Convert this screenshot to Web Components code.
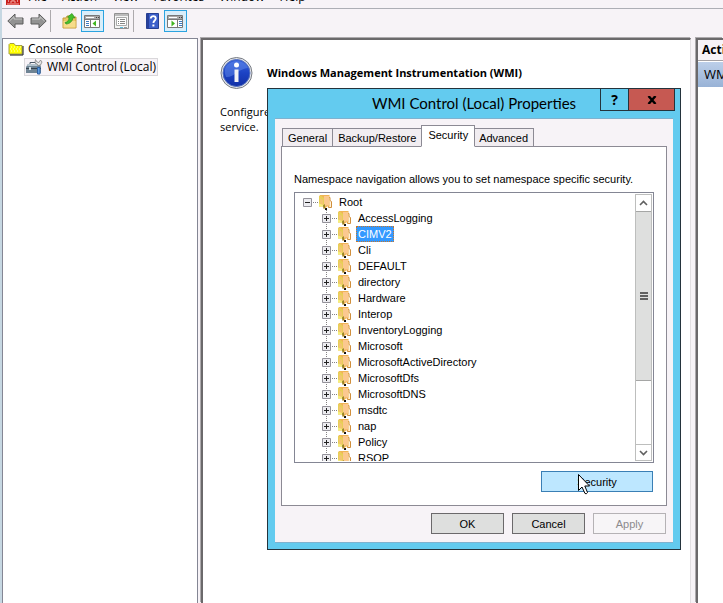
<!DOCTYPE html>
<html lang="en">
<head>
<meta charset="utf-8">
<title>WMI Control</title>
<style>
html,body{height:100%;margin:0}
body{background:#f7f3f7;color:#000;font:12px/16px "Open Sans","Noto Sans",sans-serif;overflow:hidden}
</style>
</head>
<body>
<mmc-console></mmc-console>
<script>
const define = (name, html, setup) => customElements.define(name, class extends HTMLElement {
  constructor() {
    super();
    const t = document.createElement('template');
    t.innerHTML = html;
    this.attachShadow({mode: 'open'}).append(t.content.cloneNode(true));
  }
  connectedCallback() { if (setup) setup(this, this.shadowRoot); }
});

define('menu-bar', `
<style>
:host{display:flex;align-items:flex-end;height:8px;overflow:hidden;border-bottom:1px solid #adaeb5;padding:0 0 0 4px}
svg{flex:none;margin-bottom:3px}
nav{display:flex;gap:15px;margin-left:8px;padding-bottom:3px}
button{font:inherit;line-height:16px;border:0;padding:0;background:none;color:inherit}
</style>
<svg width="14" height="14" viewBox="0 0 14 14"><path d="M0 0h14v14H0z" fill="#c9201c"/><path d="M4 11h2v-2h2v2h2M1 13h12" stroke="#f3a8a0" fill="none"/><path d="M2 10h1M11 10h1" stroke="#fff"/></svg>
<nav><button>File</button><button>Action</button><button>View</button><button>Favorites</button><button>Window</button><button>Help</button></nav>`);

define('tool-button', `
<style>
:host{display:block}
button{display:grid;place-items:center;width:23px;height:22px;padding:0;border:1px solid transparent;background:none}
:host([pressed]) button{background:#d9eefa;border-color:#2ba3e0}
</style>
<button type="button"><slot></slot></button>`, (el, root) => {
  root.querySelector('button').setAttribute('aria-label', el.getAttribute('label'));
});

define('tool-bar', `
<style>
:host{display:flex;align-items:flex-start;padding:1px 0 6px 2px}
i{width:1px;height:22px;background:#adaaad;margin-right:7px}
.gap{margin-left:6px}
svg{display:block}
</style>
<tool-button label="Back"><svg width="17" height="16" viewBox="0 0 17 16"><path d="M.8 8 8 1v4h8v6H8v4z" fill="#929292" stroke="#5d5d5d"/><path d="M2.500 8 7 3.600V6h8" stroke="#c8c8c8" fill="none"/></svg></tool-button>
<tool-button label="Forward"><svg width="17" height="16" viewBox="0 0 17 16"><path d="M16.200 8 9 1v4H1v6h8v4z" fill="#929292" stroke="#5d5d5d"/><path d="M2 6h8V3.600L14.500 8" stroke="#c8c8c8" fill="none"/></svg></tool-button>
<i></i>
<tool-button label="Up one level"><svg width="15" height="16" viewBox="0 0 15 16"><path d="M1 5h3l1-2h3l1 1h5v11H1z" fill="#e9c765" stroke="#c79a3c"/><path d="M1.500 8h12v6.500h-12z" fill="#f6dc8b"/><path d="M3 9.500C6 9 7 7 7 4.500L5.500 4 10 .5l3 4.500-2-.4C10.500 8.500 7.500 11 4 11z" fill="#45c02b" stroke="#2c8f1c" stroke-width=".7"/></svg></tool-button>
<tool-button label="Show or hide console tree" pressed><svg width="17" height="15" viewBox="0 0 17 15"><path d="M.5 1.500h15v12H.5z" fill="#fff" stroke="#787878"/><path d="M1 2h14v3H1z" fill="#a9a9a9"/><path d="M2 3.500h8" stroke="#fff"/><path d="M12 3.500h1m1 0h1" stroke="#444"/><path d="M1 5.500h14M6.500 6v7" stroke="#787878"/><path d="M2 7.500h3M2 9.500h3M2 11.500h3" stroke="#3d7ac0"/><path d="M12 6.500v6L8.500 9.500z" fill="#3fb521"/></svg></tool-button>
<tool-button class="gap" label="Properties"><svg width="15" height="16" viewBox="0 0 15 16"><path d="M.5.500h14v15H.5z" fill="#f4f4f4" stroke="#929292"/><path d="M1 2h13" stroke="#bbb" stroke-width="2"/><path d="M2.500 4.500h10v8h-10z" fill="#fff" stroke="#aaa"/><path d="M4 6.500h1m1 0h5M4 8.500h1m1 0h5M4 10.500h1m1 0h5" stroke="#858585"/><path d="M6 14.500h3" stroke="#56bce0"/><path d="M10 14.500h3" stroke="#999"/></svg></tool-button>
<i></i>
<tool-button label="Help"><svg width="13" height="16" viewBox="0 0 13 16"><path d="M.5.500h12v15H.5z" fill="#3c5fca" stroke="#263f93"/><path d="M1 1h2v14H1z" fill="#27409b"/><path d="M4.800 5.500c0-3.300 5-3.300 5 0C9.800 7.500 7.400 7.500 7.400 10" fill="none" stroke="#fff" stroke-width="1.800"/><path d="M6.400 11.500h2v2h-2z" fill="#fff"/></svg></tool-button>
<tool-button label="Show or hide action pane" pressed><svg width="17" height="15" viewBox="0 0 17 15"><path d="M.5 1.500h15v12H.5z" fill="#fff" stroke="#787878"/><path d="M1 2h14v3H1z" fill="#a9a9a9"/><path d="M2 3.500h8" stroke="#fff"/><path d="M12 3.500h1m1 0h1" stroke="#444"/><path d="M1 5.500h14M10.500 6v7" stroke="#787878"/><path d="M12 7.500h3M12 9.500h3M12 11.500h3" stroke="#3d7ac0"/><path d="M4.500 6.500v6L8 9.500z" fill="#3fb521"/></svg></tool-button>`);

define('console-tree', `
<style>
:host{display:block;background:#fff;border:1px solid #848694;border-bottom:0;padding:1px 0 0 5px}
ul{list-style:none;margin:0;padding:0}
li span{display:flex;align-items:center;height:18px;width:max-content}
ul ul{padding-left:16px}
.root{gap:4px}
.sel{gap:4px;padding:0 1px;height:16px;border:1px solid #d9d7da;background:#f7f3f7}
svg{flex:none}
</style>
<ul role="tree"><li role="treeitem"><span class="root"><svg width="16" height="14" viewBox="0 0 16 14"><path d="M1 12V2.500L2 1.500h4l1.500 2H14V12z" fill="#ffff00" stroke="#a6a240"/><path d="M3 5h1m2 0h1m2 0h1m2 0h1M2 7h1m2 0h1m2 0h1m2 0h1M3 9h1m2 0h1m2 0h1m2 0h1" stroke="#ffffc4"/><path d="M15 4v9H2" fill="none" stroke="#111"/></svg>Console Root</span>
<ul role="group"><li role="treeitem" aria-selected="true"><span class="sel"><svg width="17" height="16" viewBox="0 0 17 16"><path d="M4 5.500V3.500h6v2" fill="none" stroke="#4a5866"/><path d="M2 5h12l1 3v6H0V8z" fill="#6f8494"/><path d="M2 5h10l1 2H1z" fill="#b3c2cc"/><path d="M0 9.500h15" stroke="#36424d"/><path d="M3 8h2v3H3z" fill="#dce5ea"/><path d="M12.500 5v2" stroke="#888" stroke-width="2"/><path d="M9.500.5 11 3l2 .5L14.500 1l1.500 2-1.500 3-2 .5L9 3.500z" fill="#e6e6e6" stroke="#777" stroke-width=".7"/><path d="M11.500 8.500h2.500v6.500h-2.500z" fill="#5d9de0" stroke="#2d60a4"/></svg>WMI Control (Local)</span></li></ul></li></ul>`);

define('details-pane', `
<style>
:host{display:block;background:#fff;border:solid #6b696b;border-width:2px 0 0 2px;border-right:1px solid #e2dfe2;box-shadow:-1px -1px 0 #adaaad;padding:16px 17px}
header{display:flex;align-items:center;gap:14px}
h1{font-size:11px;line-height:16px;margin:0}
p{font-size:11px;line-height:15px;margin:14px 0 0}
svg{flex:none}
</style>
<header><svg width="33" height="34" viewBox="0 0 33 34"><defs><linearGradient id="g" x2="0" y2="1"><stop stop-color="#3763dc"/><stop offset=".5" stop-color="#1c43c4"/><stop offset="1" stop-color="#1230a6"/></linearGradient></defs><circle cx="16.500" cy="17" r="15.500" fill="#e4e6ea" stroke="#777c84"/><circle cx="16.500" cy="17" r="13.500" fill="url(#g)" stroke="#5571bd"/><path d="M5 13C8 3 25 3 28 12C20 12 13 22 6 21Q4 17 5 13" fill="#6b93ee" opacity=".45"/><circle cx="16.500" cy="9" r="2.500" fill="#fff"/><path d="M14.500 13.500h4V26h-4z" fill="#f2f2f4"/></svg><h1>Windows Management Instrumentation (WMI)</h1></header>
<p>Configures and controls the Windows Management Instrumentation (WMI)<br>service.</p>`);

define('action-pane', `
<style>
:host{display:block;background:#fff;border:solid #6b696b;border-width:2px 0 0 2px;box-shadow:-1px -1px 0 #adaaad;overflow:hidden;white-space:nowrap}
h2{font-size:12px;line-height:20px;margin:0;padding:0 4px;background:#f7f3f7;border-bottom:1px solid #a5a2a5}
div{margin-top:1px;padding:0 6px;font-size:13px;line-height:25px;background:linear-gradient(#bccfe9,#98b2d6)}
</style>
<h2>Actions</h2><div>WMI Control (Local)</div>`);

define('namespace-item', `
<style>
:host{display:flex;height:16px;align-items:center}
svg{flex:none}
span{padding:0 2px;line-height:16px;margin-left:3px}
:host([selected]) span{background:#3399ff;color:#fff;outline:1px dotted #c8762a;outline-offset:-1px}
.v{display:none}
:host([leaf]) .v{display:inline}
:host(:not([leaf])) .r{display:inline}
.r{display:none}
</style>
<svg width="31" height="16" viewBox="0 0 31 16">
<path class="v" d="M4.500 0v16" stroke="#848284" stroke-dasharray="1 1"/>
<path class="r" d="M23.500 14v2" stroke="#848284" stroke-dasharray="1 1"/>
<path d="M10 8.500h5" stroke="#848284" stroke-dasharray="1 1"/>
<path d="M.5 4.500h8v8h-8z" fill="#ececf0" stroke="#94929a"/><path d="M2 8.500h5" stroke="#222"/><path class="v" d="M4.500 6v5" stroke="#222"/>
<path d="M22 14h2v2h-2z" fill="#111"/>
<path d="M25.500 3.500h1.500v3l1.500 1v6h-3z" fill="#fff1d8" stroke="#d08f3c"/>
<path d="M16 2.500 17 1h9.500v11.500H24L21.500 15 20 12.500h-4z" fill="#f0b455"/>
<path d="M21 2h5v9.500h-2.500L21 12z" fill="#fbc88f"/>
<path d="M16 2.500 18 1.500 21 4v7.500L16 12z" fill="#e8cf58"/>
<path d="M17 4l3 2v5h-3z" fill="#f3c572"/>
<path d="M16 9.500 20 11v1.500h-4z" fill="#f5f07c"/>
<path d="M20 11.500 22 10v3.500L20.500 15z" fill="#98862b"/></svg><span><slot></slot></span>`);

define('scroll-track', `
<style>
:host{display:flex;flex-direction:column;width:15px;border:1px solid #bdbebd;background:#fff}
button{flex:none;display:grid;place-items:center;height:16px;padding:0;border:0;background:#fff}
.track{flex:1;display:flex;flex-direction:column}
.thumb{height:72%;display:grid;place-items:center;background:#dedfde;border:solid #a5a6a5;border-width:1px 0}
.down{border-top:1px solid #bdbebd}
</style>
<button type="button" aria-label="Scroll up"><svg width="9" height="6" viewBox="0 0 9 6"><path d="M1 5 4.500 1.500 8 5" fill="none" stroke="#606060" stroke-width="1.600"/></svg></button>
<div class="track"><div class="thumb"><svg width="8" height="8" viewBox="0 0 8 8"><path d="M0 1h8M0 4h8M0 7h8" stroke="#606060" stroke-width="2"/></svg></div></div>
<button type="button" class="down" aria-label="Scroll down"><svg width="9" height="6" viewBox="0 0 9 6"><path d="M1 1 4.500 4.500 8 1" fill="none" stroke="#606060" stroke-width="1.600"/></svg></button>`);

define('namespace-tree', `
<style>
:host{display:flex;height:267px;border:1px solid #848694;padding:1px;background:#fff}
.list{flex:1;overflow:hidden;padding-left:7px}
.kids{padding-left:19px}
</style>
<div class="list" role="tree"><namespace-item role="treeitem">Root</namespace-item><div class="kids" role="group"></div></div><scroll-track></scroll-track>`, (el, root) => {
  const kids = root.querySelector('.kids');
  if (kids.childElementCount) return;
  for (const n of ['AccessLogging','CIMV2','Cli','DEFAULT','directory','Hardware','Interop','InventoryLogging','Microsoft','MicrosoftActiveDirectory','MicrosoftDfs','MicrosoftDNS','msdtc','nap','Policy','RSOP']) {
    const i = document.createElement('namespace-item');
    i.setAttribute('leaf', '');
    i.setAttribute('role', 'treeitem');
    if (n === 'CIMV2') i.setAttribute('selected', '');
    i.textContent = n;
    kids.append(i);
  }
});

define('push-button', `
<style>
:host{display:block;width:73px}
:host([hot]){width:112px}
button{box-sizing:border-box;width:100%;height:21px;padding:0;font:inherit;color:#000;background:#dedfde;border:1px solid #6b696b}
button:disabled{color:#8c8a8c;background:#f7f5f7;border-color:#b5b2b5}
:host([hot]) button{background:#bde7ff;border-color:#3a7fb5}
</style>
<button type="button"><slot></slot></button>`, (el, root) => {
  root.querySelector('button').disabled = el.hasAttribute('disabled');
});

define('tab-strip', `
<style>
:host{display:flex;align-items:flex-end;padding-left:1px;margin-bottom:-1px;position:relative}
button{font:inherit;color:inherit;height:19px;padding:0 5px;border:1px solid #8c8a94;border-right-width:0;background:#f1edf1}
button:last-child{border-right-width:1px;border-left-width:0;padding:0 5px 0 4px}
button[aria-selected=true]{height:22px;padding:0 6px 3px;background:#fff;border-bottom-color:#fff;border-right-width:1px}
div{display:contents}
</style>
<div role="tablist"><button role="tab">General</button><button role="tab">Backup/Restore</button><button role="tab" aria-selected="true">Security</button><button role="tab">Advanced</button></div>`);

define('properties-dialog', `
<style>
:host{display:block;box-sizing:border-box;border:1px solid #24333c;background:#63cbef;font:11px/16px "Liberation Sans",Arial,sans-serif}
.title{display:grid;grid-template-columns:1fr auto;height:29px}
h1{margin:0;padding-left:80px;text-align:center;font:15px/29px Lato,"Open Sans",sans-serif}
.caption{display:flex;height:21px;margin-right:5px;border:solid #24333c;border-width:0 1px 1px}
.caption button{display:grid;place-items:center;border:0;padding:0;width:27px;background:none;font:bold 14px/20px "Open Sans",sans-serif;color:#000}
.caption .close{width:46px;background:#c65952;border-left:1px solid #24333c}
.body{margin:0 7px 6px;padding:6px 6px 8px;background:#f7f3f7;border:solid #7fb2cf;border-width:1px 0}
.panel{background:#fff;border:1px solid #8c8a94;padding:24px 12px 13px}
p{margin:0 0 5px}
.row{display:flex;justify-content:flex-end;gap:8px;margin-top:7px;padding-right:1px}
.panel .row{margin-top:8px}
</style>
<div class="title"><h1>WMI Control (Local) Properties</h1><div class="caption"><button type="button" aria-label="Help">?</button><button type="button" class="close" aria-label="Close"><svg width="10" height="8" viewBox="0 0 10 8"><path d="M1.500 0 8.500 8M8.500 0 1.500 8" stroke="#000" stroke-width="2.400"/></svg></button></div></div>
<div class="body"><tab-strip></tab-strip>
<div class="panel"><p>Namespace navigation allows you to set namespace specific security.</p><namespace-tree></namespace-tree><div class="row"><push-button hot>Security</push-button></div></div>
<div class="row"><push-button>OK</push-button><push-button>Cancel</push-button><push-button disabled>Apply</push-button></div></div>`);

define('mmc-console', `
<style>
:host{display:flex;flex-direction:column;height:100%;box-sizing:border-box;border-left:2px solid #c6d7e2;position:relative}
main{flex:1;display:grid;grid-template-columns:194px minmax(0,1fr) 27px;column-gap:5px}
main console-tree{margin-right:-2px}
properties-dialog{position:absolute;left:265px;top:88px;width:414px}
.pointer{position:absolute;left:576px;top:474px}
</style>
<menu-bar></menu-bar><tool-bar></tool-bar>
<main><console-tree></console-tree><details-pane></details-pane><action-pane></action-pane></main>
<properties-dialog role="dialog" aria-label="WMI Control (Local) Properties"></properties-dialog>
<svg class="pointer" width="13" height="21" viewBox="0 0 13 21"><path d="M.5.5v16l3.500-3.500 3 6.500q1.500 1 2.500-1L6.800 12H11.500z" fill="#fff" stroke="#000"/></svg>`);
</script>
</body>
</html>
